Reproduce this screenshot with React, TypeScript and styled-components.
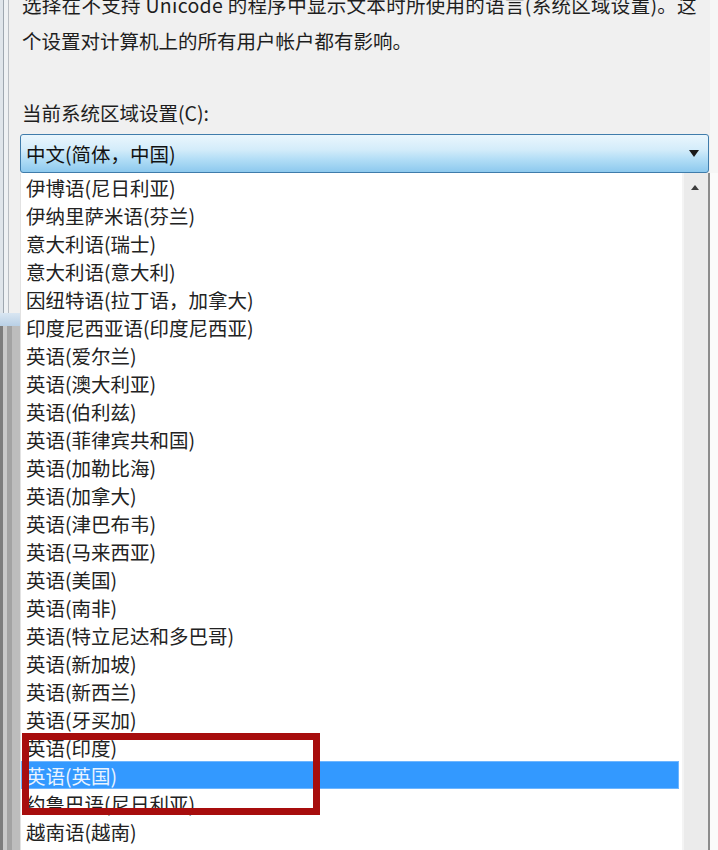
import React from "react";
import styled, { createGlobalStyle } from "styled-components";

const GlobalStyle = createGlobalStyle`
  html, body {
    margin: 0;
    padding: 0;
    background: #f0f0f0;
    overflow: hidden;
  }
  body {
    font-family: "Noto Sans CJK SC", "Noto Sans", sans-serif;
  }
`;

const Screen = styled.div`
  display: grid;
  grid-template-columns: 20px 690px 8px;
  width: 718px;
  height: 850px;
  overflow: hidden;
  background: #f0f0f0;
`;

const LeftEdge = styled.div`
  display: flex;
  flex-direction: column;
`;

const WindowFrame = styled.div`
  height: 313px;
  box-sizing: border-box;
  background: linear-gradient(to right, #dfe5eb 0 3px, #9ea7b0 3px 4px, #eef1f4 4px 8px, #b9bec4 8px 9px, #f0f0f0 9px);
`;

const FrameBand = styled.div`
  height: 13px;
  background: linear-gradient(to bottom, #d9e6f2, #b9d0e6);
`;

const Backdrop = styled.div`
  flex: 1;
  background: linear-gradient(to right, #7d7d7d 0 3px, #c9c9c9 3px 7px, #a3a3a3 7px 12px, #bdbdbd 12px);
`;

const RightEdge = styled.div`
  background: linear-gradient(to bottom, #f6f6f6 0 173px, #fbfbfb 173px);
`;

const Main = styled.div`
  display: flex;
  flex-direction: column;
  min-width: 0;
`;

const Intro = styled.p`
  margin: -13px 0 0 0;
  padding-left: 2px;
  font-size: 19.5px;
  line-height: 36px;
  color: #1e1e1e;
  white-space: nowrap;
`;

const IntroLine = styled.span<{ $spacing?: number }>`
  display: block;
  letter-spacing: ${(p) => p.$spacing ?? 0}px;
`;

const FieldLabel = styled.div`
  margin-top: 40px;
  padding-left: 2px;
  font-size: 19.5px;
  line-height: 28px;
  color: #1e1e1e;
`;

const Combo = styled.div`
  margin-top: 7px;
  height: 39px;
  margin-right: 1px;
  box-sizing: border-box;
  display: flex;
  align-items: center;
  justify-content: space-between;
  padding: 0 9px 0 5px;
  border: 1px solid #3f7cab;
  border-radius: 3px;
  background: linear-gradient(to bottom, #eaf6fd 0%, #d3ecfa 40%, #b3def6 65%, #8dc9ee 100%);
`;

const ComboValue = styled.span`
  font-size: 19.5px;
  color: #121212;
`;

const ComboArrow = styled.span`
  width: 0;
  height: 0;
  border-left: 5.5px solid transparent;
  border-right: 5.5px solid transparent;
  border-top: 7px solid #1a1a1a;
`;

const ListBox = styled.div`
  flex: 1;
  display: flex;
  background: #ffffff;
  border-right: 2px solid #8c8c8c;
  border-left: 1px solid #e2e2e2;
  min-height: 0;
`;

const Items = styled.div`
  flex: 1;
  display: flex;
  flex-direction: column;
  padding-right: 3px;
`;

const Row = styled.div<{ $selected?: boolean }>`
  height: 28px;
  flex: none;
  display: flex;
  align-items: center;
  padding-left: 5px;
  font-size: 19.5px;
  color: ${(p) => (p.$selected ? "#eaf4ff" : "#222222")};
  background: ${(p) => (p.$selected ? "#3399ff" : "transparent")};
  box-shadow: ${(p) => (p.$selected ? "inset 0 0 0 1px #6fb6ff" : "none")};
  white-space: nowrap;
`;

const RowGroup = styled.div`
  position: relative;
  display: flex;
  flex-direction: column;
`;

const Highlight = styled.div`
  position: absolute;
  left: 1px;
  top: 0;
  width: 298px;
  height: 82px;
  box-sizing: border-box;
  border: 7px solid #a70d0d;
  pointer-events: none;
`;

const ScrollBar = styled.div`
  width: 26px;
  flex: none;
  background: linear-gradient(to right, #f4f4f4 0 2px, #ebebeb 2px);
  display: flex;
  flex-direction: column;
  align-items: center;
`;

const ScrollUp = styled.span`
  margin-top: 12px;
  width: 0;
  height: 0;
  border-left: 4px solid transparent;
  border-right: 4px solid transparent;
  border-bottom: 5px solid #3c3c3c;
`;

const before = [
  "伊博语(尼日利亚)",
  "伊纳里萨米语(芬兰)",
  "意大利语(瑞士)",
  "意大利语(意大利)",
  "因纽特语(拉丁语，加拿大)",
  "印度尼西亚语(印度尼西亚)",
  "英语(爱尔兰)",
  "英语(澳大利亚)",
  "英语(伯利兹)",
  "英语(菲律宾共和国)",
  "英语(加勒比海)",
  "英语(加拿大)",
  "英语(津巴布韦)",
  "英语(马来西亚)",
  "英语(美国)",
  "英语(南非)",
  "英语(特立尼达和多巴哥)",
  "英语(新加坡)",
  "英语(新西兰)",
  "英语(牙买加)",
];

const marked = [
  { label: "英语(印度)", selected: false },
  { label: "英语(英国)", selected: true },
  { label: "约鲁巴语(尼日利亚)", selected: false },
];

const after = ["越南语(越南)", "藏语(中华人民共和国)", "中文(简体，中国)"];

export default function App() {
  return (
    <>
      <GlobalStyle />
      <Screen>
        <LeftEdge>
          <WindowFrame />
          <FrameBand />
          <Backdrop />
        </LeftEdge>
        <Main>
          <Intro>
            <IntroLine $spacing={0.3}>
              选择在不支持 Unicode 的程序中显示文本时所使用的语言(系统区域设置)。这
            </IntroLine>
            <IntroLine>个设置对计算机上的所有用户帐户都有影响。</IntroLine>
          </Intro>
          <FieldLabel>当前系统区域设置(C):</FieldLabel>
          <Combo>
            <ComboValue>中文(简体，中国)</ComboValue>
            <ComboArrow />
          </Combo>
          <ListBox>
            <Items>
              {before.map((t) => (
                <Row key={t}>{t}</Row>
              ))}
              <RowGroup>
                {marked.map((m) => (
                  <Row key={m.label} $selected={m.selected}>
                    {m.label}
                  </Row>
                ))}
                <Highlight />
              </RowGroup>
              {after.map((t) => (
                <Row key={t}>{t}</Row>
              ))}
            </Items>
            <ScrollBar>
              <ScrollUp />
            </ScrollBar>
          </ListBox>
        </Main>
        <RightEdge />
      </Screen>
    </>
  );
}
